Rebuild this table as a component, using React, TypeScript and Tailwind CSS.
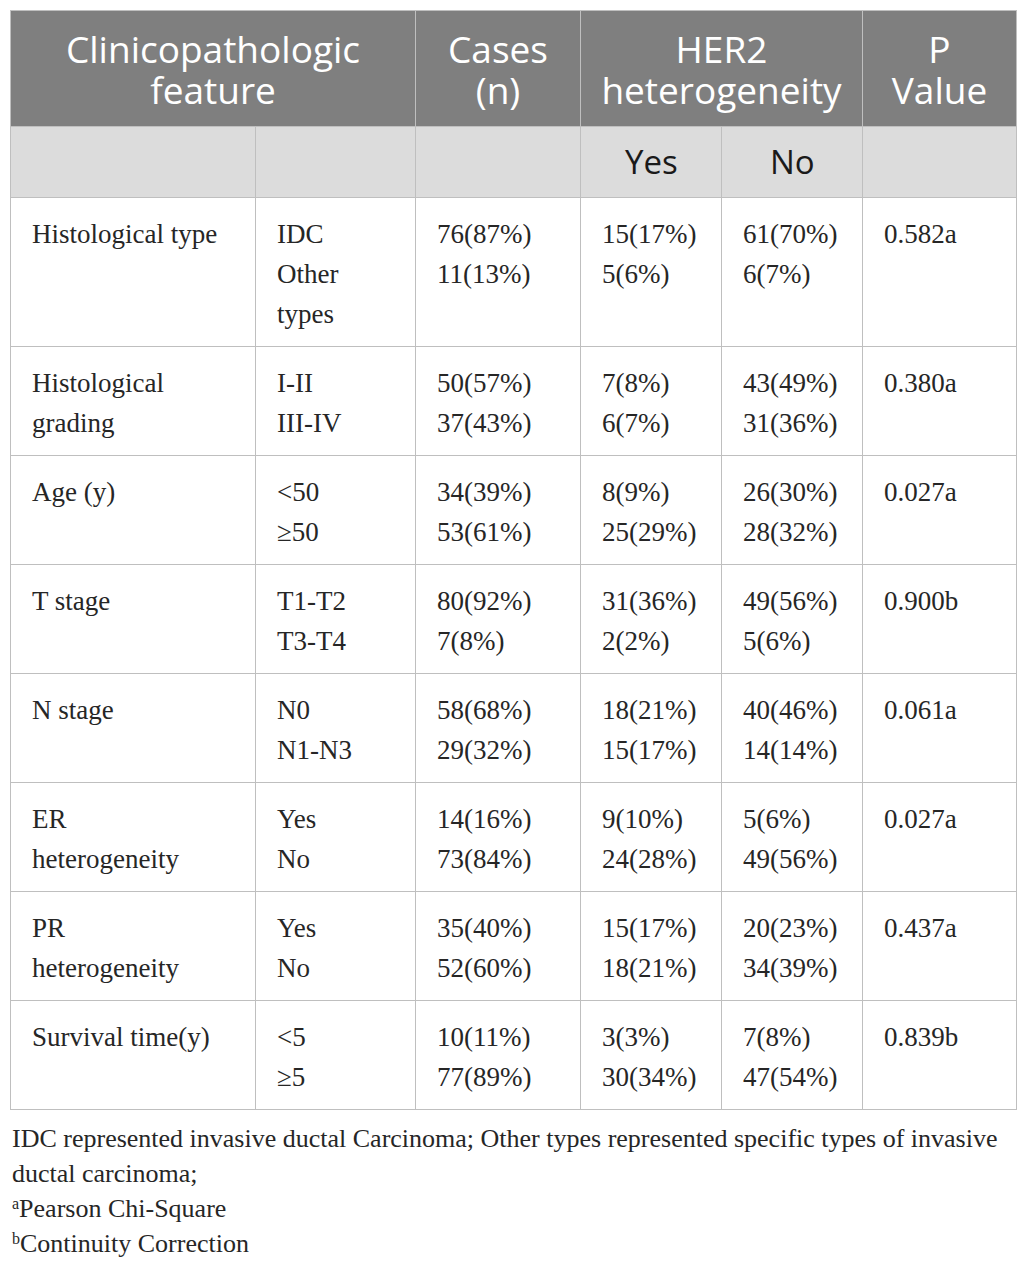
import React from "react";

interface Row {
  feature: string[];
  groups: string[];
  cases: string[];
  yes: string[];
  no: string[];
  p: string;
}

const rows: Row[] = [
  { feature: ["Histological type"], groups: ["IDC", "Other", "types"], cases: ["76(87%)", "11(13%)"], yes: ["15(17%)", "5(6%)"], no: ["61(70%)", "6(7%)"], p: "0.582a" },
  { feature: ["Histological", "grading"], groups: ["I-II", "III-IV"], cases: ["50(57%)", "37(43%)"], yes: ["7(8%)", "6(7%)"], no: ["43(49%)", "31(36%)"], p: "0.380a" },
  { feature: ["Age (y)"], groups: ["<50", "≥50"], cases: ["34(39%)", "53(61%)"], yes: ["8(9%)", "25(29%)"], no: ["26(30%)", "28(32%)"], p: "0.027a" },
  { feature: ["T stage"], groups: ["T1-T2", "T3-T4"], cases: ["80(92%)", "7(8%)"], yes: ["31(36%)", "2(2%)"], no: ["49(56%)", "5(6%)"], p: "0.900b" },
  { feature: ["N stage"], groups: ["N0", "N1-N3"], cases: ["58(68%)", "29(32%)"], yes: ["18(21%)", "15(17%)"], no: ["40(46%)", "14(14%)"], p: "0.061a" },
  { feature: ["ER", "heterogeneity"], groups: ["Yes", "No"], cases: ["14(16%)", "73(84%)"], yes: ["9(10%)", "24(28%)"], no: ["5(6%)", "49(56%)"], p: "0.027a" },
  { feature: ["PR", "heterogeneity"], groups: ["Yes", "No"], cases: ["35(40%)", "52(60%)"], yes: ["15(17%)", "18(21%)"], no: ["20(23%)", "34(39%)"], p: "0.437a" },
  { feature: ["Survival time(y)"], groups: ["<5", "≥5"], cases: ["10(11%)", "77(89%)"], yes: ["3(3%)", "30(34%)"], no: ["7(8%)", "47(54%)"], p: "0.839b" },
];

const sans = "font-['Open_Sans','Noto_Sans',sans-serif]";
const th = "border border-[#bfbfbf] font-normal";
const td = "border border-[#bfbfbf] align-top pl-[21px] pr-1 pt-[16px] pb-[12px] whitespace-nowrap";

function Lines({ items }: { items: string[] }) {
  return (
    <>
      {items.map((t, i) => (
        <div key={i}>{t}</div>
      ))}
    </>
  );
}

export default function App() {
  return (
    <div className="bg-white w-[1026px] min-h-[1267px] pt-[10px] pl-[10px] font-['Liberation_Serif',serif] text-[#262626]">
      <table className="border-collapse table-fixed w-[1006px] text-[27px] leading-[40px]">
        <colgroup>
          <col className="w-[245px]" />
          <col className="w-[160px]" />
          <col className="w-[165px]" />
          <col className="w-[141px]" />
          <col className="w-[141px]" />
          <col className="w-[154px]" />
        </colgroup>
        <thead>
          <tr className={`bg-[#7f7f7f] text-white h-[116px] text-[37px] leading-[41px] ${sans}`}>
            <th colSpan={2} className={`${th} text-center`}>
              Clinicopathologic
              <br />
              feature
            </th>
            <th className={`${th} text-center`}>
              Cases
              <br />
              (n)
            </th>
            <th colSpan={2} className={`${th} text-center`}>
              HER2
              <br />
              heterogeneity
            </th>
            <th className={`${th} text-center`}>
              P
              <br />
              Value
            </th>
          </tr>
          <tr className={`bg-[#dcdcdc] h-[71px] text-[33px] text-[#1a1a1a] ${sans}`}>
            <th className={th}></th>
            <th className={th}></th>
            <th className={th}></th>
            <th className={`${th} text-left pl-[44px]`}>Yes</th>
            <th className={`${th} text-left pl-[48px]`}>No</th>
            <th className={th}></th>
          </tr>
        </thead>
        <tbody>
          {rows.map((r) => (
            <tr key={r.feature.join(" ")}>
              <td className={td}>
                <Lines items={r.feature} />
              </td>
              <td className={td}>
                <Lines items={r.groups} />
              </td>
              <td className={td}>
                <Lines items={r.cases} />
              </td>
              <td className={td}>
                <Lines items={r.yes} />
              </td>
              <td className={td}>
                <Lines items={r.no} />
              </td>
              <td className={td}>{r.p}</td>
            </tr>
          ))}
        </tbody>
      </table>
      <div className="mt-[11px] pl-[2px] text-[26px] leading-[35px] text-[#262626] whitespace-nowrap">
        <p>IDC represented invasive ductal Carcinoma; Other types represented specific types of invasive</p>
        <p>ductal carcinoma;</p>
        <p>
          <sup className="text-[16px]">a</sup>Pearson Chi-Square
        </p>
        <p>
          <sup className="text-[16px]">b</sup>Continuity Correction
        </p>
      </div>
    </div>
  );
}
